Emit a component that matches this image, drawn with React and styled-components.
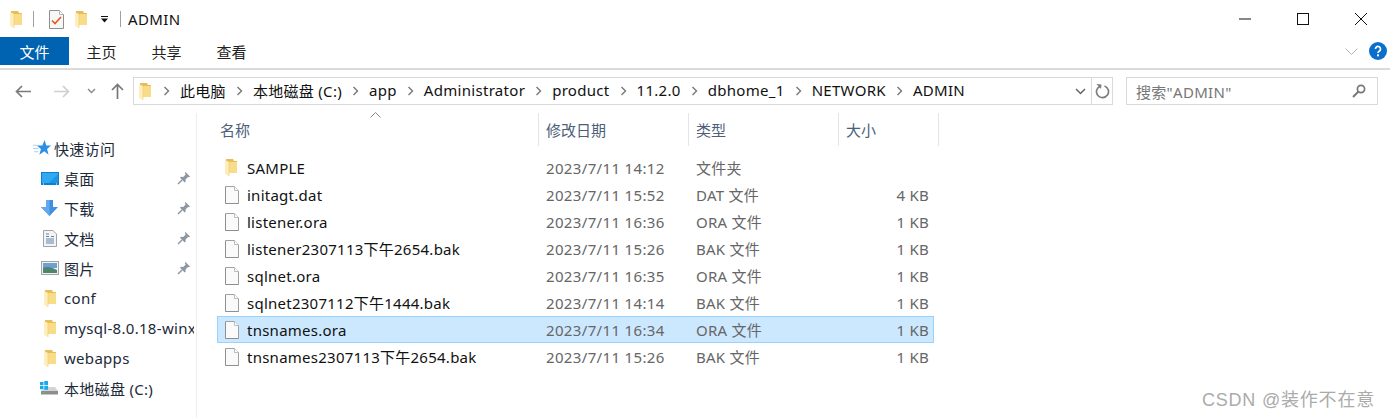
import React from "react";
import styled, { createGlobalStyle } from "styled-components";

const GlobalStyle = createGlobalStyle`
  html, body {
    margin: 0;
    padding: 0;
    background: #fff;
    overflow: hidden;
  }
  * { box-sizing: border-box; }
`;

const Window = styled.div`
  position: relative;
  width: 1390px;
  height: 418px;
  overflow: hidden;
  background: #fff;
  color: #1a1a1a;
  font-family: "Noto Sans", "Noto Sans CJK SC", sans-serif;
  font-size: 15px;
`;

const TitleBar = styled.div`
  display: flex;
  align-items: center;
  height: 38px;
  padding-left: 9px;
`;

const TitleDivider = styled.div`
  width: 1px;
  height: 16px;
  background: #a0a0a0;
  margin-left: ${(p) => p.$left}px;
`;

const TitleIcon = styled.span`
  display: flex;
  margin-left: ${(p) => p.$left}px;
`;

const TitleText = styled.div`
  font-size: 15px;
  letter-spacing: 0.4px;
  margin-left: 7px;
  color: #111;
`;

const WindowButtons = styled.div`
  display: flex;
  margin-left: auto;
`;

const WindowButton = styled.div`
  width: 58px;
  display: flex;
  justify-content: center;
  align-items: center;
`;

const Ribbon = styled.div`
  display: flex;
  align-items: center;
  height: 32px;
  border-bottom: 2px solid #dadada;
  padding-bottom: 4px;
`;

const FileTab = styled.div`
  width: 69px;
  height: 28px;
  background: #0063b1;
  color: #fff;
  display: flex;
  align-items: center;
  justify-content: center;
  font-size: 15px;
`;

const RibbonTab = styled.div`
  width: 65px;
  text-align: center;
  font-size: 15px;
  color: #222;
`;

const RibbonRight = styled.div`
  display: flex;
  align-items: center;
  gap: 11px;
  margin-left: auto;
  padding-right: 3px;
`;

const NavRow = styled.div`
  display: flex;
  align-items: center;
  height: 43px;
  padding: 7px 12px 8px 14px;
`;

const NavButtons = styled.div`
  display: flex;
  align-items: center;
  width: 119px;
  flex: none;
`;

const NavSlot = styled.div`
  display: flex;
  margin-left: ${(p) => p.$left}px;
`;

const AddressBox = styled.div`
  display: flex;
  align-items: center;
  width: 959px;
  height: 28px;
  border: 1px solid #d9d9d9;
  padding-left: 5px;
  flex: none;
`;

const AddressFolder = styled.span`
  display: flex;
  margin-right: 2px;
`;

const Crumb = styled.span`
  white-space: nowrap;
  font-size: 15px;
  letter-spacing: 0.3px;
  color: #111;
  position: relative;
  top: -1px;
`;

const CrumbArrow = styled.span`
  display: flex;
  width: 27px;
  justify-content: center;
`;

const AddressEnd = styled.div`
  display: flex;
  align-items: center;
  margin-left: auto;
  height: 100%;
  width: 21px;
  justify-content: center;
`;

const RefreshBox = styled.div`
  width: 21px;
  height: 28px;
  border: 1px solid #d9d9d9;
  border-left: none;
  display: flex;
  align-items: center;
  justify-content: center;
  flex: none;
  margin-right: 13px;
`;

const SearchBox = styled.div`
  display: flex;
  align-items: center;
  justify-content: space-between;
  width: 252px;
  height: 28px;
  border: 1px solid #d9d9d9;
  padding: 0 11px 0 9px;
  color: #777;
  font-size: 15px;
  letter-spacing: 0.3px;
  flex: none;
`;

const Body = styled.div`
  display: flex;
  height: 305px;
`;

const Sidebar = styled.div`
  width: 197px;
  flex: none;
  border-right: 1px solid #eeeeee;
  padding-top: 20px;
`;

const NavItem = styled.div`
  display: flex;
  align-items: center;
  height: 30px;
  padding-left: ${(p) => (p.$top ? 29 : 35)}px;
  position: relative;
`;

const NavIcon = styled.div`
  width: ${(p) => (p.$top ? 25 : 29)}px;
  flex: none;
  display: flex;
  justify-content: center;
`;

const NavLabel = styled.div`
  width: 130px;
  overflow: hidden;
  white-space: nowrap;
  font-size: 15px;
  letter-spacing: 0.3px;
  color: #1c2a3a;
`;

const Pin = styled.div`
  position: absolute;
  left: 177px;
  top: 8px;
  display: flex;
`;

const Main = styled.div`
  flex: 1;
  padding-left: 20px;
`;

const HeaderRow = styled.div`
  display: flex;
  height: 33px;
  position: relative;
`;

const SortCaret = styled.div`
  position: absolute;
  left: 153px;
  top: -1px;
  display: flex;
`;

const HeaderCell = styled.div`
  width: ${(p) => p.$w}px;
  padding-left: ${(p) => p.$pad}px;
  display: flex;
  align-items: center;
  border-right: 1px solid #e5e5e5;
  font-size: 15px;
  color: #4c607a;
`;

const Rows = styled.div`
  padding-top: 8px;
`;

const Row = styled.div`
  display: flex;
  align-items: center;
  width: 717px;
  height: 27px;
  border: 1px solid ${(p) => (p.$selected ? "#99d1ff" : "transparent")};
  background: ${(p) => (p.$selected ? "#cce8ff" : "transparent")};
  font-size: 15px;
  letter-spacing: 0.25px;
`;

const NameCell = styled.div`
  display: flex;
  align-items: center;
  width: 320px;
  padding-left: 7px;
  color: #111;
`;

const FileIconWrap = styled.div`
  width: 22px;
  flex: none;
  display: flex;
`;

const DateCell = styled.div`
  width: 150px;
  padding-left: 8px;
  color: #666;
  letter-spacing: 0.35px;
`;

const TypeCell = styled.div`
  width: 120px;
  color: #666;
  padding-left: 8px;
`;

const SizeCell = styled.div`
  width: 125px;
  text-align: right;
  color: #666;
  padding-right: 4px;
`;

const Watermark = styled.div`
  position: absolute;
  right: 15px;
  bottom: 7px;
  font-size: 18px;
  letter-spacing: 0.8px;
  color: #ababab;
  font-family: "Liberation Sans", "Noto Sans CJK SC", sans-serif;
`;

function FolderIcon() {
  return (
    <svg width="12" height="17" viewBox="0 0 12 17">
      <path d="M1 0h7l1 2h3v12H1z" fill="#e6bd58" />
      <path d="M4 3h8v11H4z" fill="#f8dc88" />
      <path d="M0 1l4 2v14l-4-2z" fill="#fdeebb" />
      <path d="M4 3v14" stroke="#eccb75" strokeWidth="0.6" />
    </svg>
  );
}

function FileIcon() {
  return (
    <svg width="14" height="18" viewBox="0 0 14 18">
      <path d="M.5.5h9l4 4v13H.5z" fill="#fafafa" stroke="#a0a0a0" />
      <path d="M9.5.5v4h4" fill="#fff" stroke="#bcbcbc" />
      <path d="M1 17.500h12.500M.5 1v16.500" stroke="#8f8f8f" strokeWidth="1" />
    </svg>
  );
}

function Chevron({ color = "#777" }) {
  return (
    <svg width="7" height="10" viewBox="0 0 7 10">
      <path d="M1.5 1l4 4-4 4" fill="none" stroke={color} strokeWidth="1.4" />
    </svg>
  );
}

function PinIcon() {
  return (
    <svg width="14" height="14" viewBox="0 0 14 14">
      <path d="M8.500 1L13 5.500l-1 .8-1-.4-2.500 2.500.2 2.200-1 1L3 6.800l1-1 2.200.2L8.700 3.500l-.9-1.500z" fill="#8d97a3" />
      <path d="M5 9L1 13" stroke="#8d97a3" strokeWidth="1.400" />
    </svg>
  );
}

const crumbs = ["此电脑", "本地磁盘 (C:)", "app", "Administrator", "product", "11.2.0", "dbhome_1", "NETWORK", "ADMIN"];

const sidebarItems = [
  {
    label: "桌面",
    pin: true,
    icon: (
      <svg width="18" height="13" viewBox="0 0 18 13">
        <rect width="18" height="13" fill="#0f7fd0" />
        <path d="M1 1h16v10H1z" fill="#2fa9f2" />
        <path d="M8 11l9-9v9z" fill="#1c95e4" />
        <path d="M2 12h1M15 12h1" stroke="#fff" strokeWidth="1" />
      </svg>
    ),
  },
  {
    label: "下载",
    pin: true,
    icon: (
      <svg width="17" height="16" viewBox="0 0 17 16">
        <path d="M5 0h7v7h5l-8.500 9L0 7h5z" fill="#3f8fe0" />
        <path d="M5 0h3.500v16L0 7h5z" fill="#64a9ee" />
      </svg>
    ),
  },
  {
    label: "文档",
    pin: true,
    icon: (
      <svg width="14" height="17" viewBox="0 0 14 17">
        <path d="M.5.500h9.500l3.500 3.500v12.500H.5z" fill="#f4f4f4" stroke="#a3a3a3" />
        <path d="M3 4h3M3 6.500h3M8 6.500h3M3 9h8M3 11h8M3 13h8" stroke="#5f85a8" strokeWidth="1" />
      </svg>
    ),
  },
  {
    label: "图片",
    pin: true,
    icon: (
      <svg width="18" height="14" viewBox="0 0 18 14">
        <rect x=".5" y=".5" width="17" height="13" fill="#f2f2f2" stroke="#a3a3a3" />
        <rect x="2" y="2" width="14" height="5" fill="#6f9fd3" />
        <path d="M2 7c4-2 8-1 14 2v3H2z" fill="#4f8570" />
      </svg>
    ),
  },
  { label: "conf", icon: <FolderIcon /> },
  { label: "mysql-8.0.18-winx64", icon: <FolderIcon /> },
  { label: "webapps", icon: <FolderIcon /> },
  {
    label: "本地磁盘 (C:)",
    icon: (
      <svg width="19" height="15" viewBox="0 0 19 15">
        <path d="M1 10l5-4h9l3 4v3H1z" fill="#d4d4d4" />
        <path d="M1 10h17v3.500H1z" fill="#8d8d8d" />
        <path d="M2.500 11.500h2" stroke="#3fd06a" strokeWidth="1" />
        <path d="M0 1h3.500v3.300H0zM4.300 0H8v4.300H4.300zM0 5h3.500v3.300H0zM4.300 5H8v3.800H4.300z" fill="#16a9ee" />
      </svg>
    ),
  },
];

const files = [
  { name: "SAMPLE", date: "2023/7/11 14:12", type: "文件夹", size: "", folder: true },
  { name: "initagt.dat", date: "2023/7/11 15:52", type: "DAT 文件", size: "4 KB" },
  { name: "listener.ora", date: "2023/7/11 16:36", type: "ORA 文件", size: "1 KB" },
  { name: "listener2307113下午2654.bak", date: "2023/7/11 15:26", type: "BAK 文件", size: "1 KB" },
  { name: "sqlnet.ora", date: "2023/7/11 16:35", type: "ORA 文件", size: "1 KB" },
  { name: "sqlnet2307112下午1444.bak", date: "2023/7/11 14:14", type: "BAK 文件", size: "1 KB" },
  { name: "tnsnames.ora", date: "2023/7/11 16:34", type: "ORA 文件", size: "1 KB", selected: true },
  { name: "tnsnames2307113下午2654.bak", date: "2023/7/11 15:26", type: "BAK 文件", size: "1 KB" },
];

export default function App() {
  return (
    <Window>
      <GlobalStyle />
      <TitleBar>
        <TitleIcon $left={1}>
          <FolderIcon />
        </TitleIcon>
        <TitleDivider $left={11} />
        <TitleIcon $left={15}>
          <svg width="15" height="19" viewBox="0 0 15 19">
            <path d="M.5.500h10l4 4v14H.5z" fill="#f7f7f7" stroke="#8f8f8f" />
            <path d="M10.500.500v4h4" fill="#fff" stroke="#b5b5b5" />
            <path d="M3 10.500l3 3 6-6.500" fill="none" stroke="#e8591f" strokeWidth="1.700" />
          </svg>
        </TitleIcon>
        <TitleIcon $left={11}>
          <FolderIcon />
        </TitleIcon>
        <TitleIcon $left={13}>
          <svg width="9" height="7" viewBox="0 0 9 7">
            <path d="M1 .5h7" stroke="#111" strokeWidth="1" />
            <path d="M1 2.500h7L4.500 6.500z" fill="#111" />
          </svg>
        </TitleIcon>
        <TitleDivider $left={11} />
        <TitleText>ADMIN</TitleText>
        <WindowButtons>
          <WindowButton>
            <svg width="12" height="2" viewBox="0 0 12 2">
              <path d="M0 1h12" stroke="#111" strokeWidth="1" />
            </svg>
          </WindowButton>
          <WindowButton>
            <svg width="12" height="12" viewBox="0 0 12 12">
              <rect x=".5" y=".5" width="11" height="11" fill="none" stroke="#111" />
            </svg>
          </WindowButton>
          <WindowButton>
            <svg width="12" height="12" viewBox="0 0 12 12">
              <path d="M0 0l12 12M12 0L0 12" stroke="#111" strokeWidth="1" />
            </svg>
          </WindowButton>
        </WindowButtons>
      </TitleBar>

      <Ribbon>
        <FileTab>文件</FileTab>
        <RibbonTab>主页</RibbonTab>
        <RibbonTab>共享</RibbonTab>
        <RibbonTab>查看</RibbonTab>
        <RibbonRight>
          <svg width="13" height="7" viewBox="0 0 13 7">
            <path d="M.5.500l6 6 6-6" fill="none" stroke="#b5b5b5" strokeWidth="1" />
          </svg>
          <svg width="18" height="18" viewBox="0 0 18 18">
            <circle cx="9" cy="9" r="9" fill="#0a6fcc" />
            <path d="M6.500 7a2.500 2.500 0 1 1 3.800 2.100c-.9.600-1.300 1-1.300 2" fill="none" stroke="#fff" strokeWidth="1.700" />
            <rect x="8" y="12.300" width="2" height="2" fill="#fff" />
          </svg>
        </RibbonRight>
      </Ribbon>

      <NavRow>
        <NavButtons>
          <NavSlot $left={1}>
            <svg width="16" height="13" viewBox="0 0 16 13">
              <path d="M7 1L1.500 6.500 7 12M2 6.500h14" fill="none" stroke="#7a7a7a" strokeWidth="1.700" />
            </svg>
          </NavSlot>
          <NavSlot $left={23}>
            <svg width="16" height="13" viewBox="0 0 16 13">
              <path d="M9 1l5.500 5.500L9 12M14 6.500H0" fill="none" stroke="#cfcfcf" strokeWidth="1.700" />
            </svg>
          </NavSlot>
          <NavSlot $left={17}>
            <svg width="9" height="6" viewBox="0 0 9 6">
              <path d="M1 1l3.500 3.500L8 1" fill="none" stroke="#888" strokeWidth="1.400" />
            </svg>
          </NavSlot>
          <NavSlot $left={15}>
            <svg width="13" height="16" viewBox="0 0 13 16">
              <path d="M1 7l5.500-5.500L12 7M6.500 2v14" fill="none" stroke="#777" strokeWidth="1.700" />
            </svg>
          </NavSlot>
        </NavButtons>
        <AddressBox>
          <AddressFolder>
            <FolderIcon />
          </AddressFolder>
          {crumbs.map((c) => (
            <React.Fragment key={c}>
              <CrumbArrow>
                <Chevron />
              </CrumbArrow>
              <Crumb>{c}</Crumb>
            </React.Fragment>
          ))}
          <AddressEnd>
            <svg width="11" height="7" viewBox="0 0 11 7">
              <path d="M1 1l4.500 4.500L10 1" fill="none" stroke="#666" strokeWidth="1.500" />
            </svg>
          </AddressEnd>
        </AddressBox>
        <RefreshBox>
          <svg width="15" height="16" viewBox="0 0 15 16">
            <path d="M5 3.200a6 6 0 1 0 4.500-.2" fill="none" stroke="#7d7d7d" strokeWidth="1.700" />
            <path d="M1.500 1l5 .500-.5 4.500z" fill="#7d7d7d" />
          </svg>
        </RefreshBox>
        <SearchBox>
          <span>搜索"ADMIN"</span>
          <svg width="14" height="14" viewBox="0 0 14 14">
            <circle cx="9" cy="5" r="3.600" fill="none" stroke="#777" strokeWidth="1.700" />
            <path d="M6.500 7.500L1 13" stroke="#777" strokeWidth="2" />
          </svg>
        </SearchBox>
      </NavRow>

      <Body>
        <Sidebar>
          <NavItem $top>
            <NavIcon $top>
              <svg width="18" height="17" viewBox="0 0 17 16">
                <path d="M11 0l1.500 5.200H17l-3.700 3.200 1.400 5.600-4-3.300-4.700 3.300L7.500 8.500 3.500 5.200h5.300z" fill="#2b8fe6" />
                <path d="M0 5h4M0 8h5M1 11h4" stroke="#a9d0f2" strokeWidth="1" />
              </svg>
            </NavIcon>
            <NavLabel>快速访问</NavLabel>
          </NavItem>
          {sidebarItems.map((item) => (
            <NavItem key={item.label}>
              <NavIcon>{item.icon}</NavIcon>
              <NavLabel>{item.label}</NavLabel>
              {item.pin && (
                <Pin>
                  <PinIcon />
                </Pin>
              )}
            </NavItem>
          ))}
        </Sidebar>
        <Main>
          <HeaderRow>
            <SortCaret>
              <svg width="11" height="6" viewBox="0 0 11 6">
                <path d="M.5 5.500l5-5 5 5" fill="none" stroke="#888" strokeWidth="1" />
              </svg>
            </SortCaret>
            <HeaderCell $w={322} $pad={3}>名称</HeaderCell>
            <HeaderCell $w={150} $pad={7}>修改日期</HeaderCell>
            <HeaderCell $w={150} $pad={7}>类型</HeaderCell>
            <HeaderCell $w={100} $pad={7}>大小</HeaderCell>
          </HeaderRow>
          <Rows>
            {files.map((f) => (
              <Row key={f.name} $selected={f.selected}>
                <NameCell>
                  <FileIconWrap>{f.folder ? <FolderIcon /> : <FileIcon />}</FileIconWrap>
                  {f.name}
                </NameCell>
                <DateCell>{f.date}</DateCell>
                <TypeCell>{f.type}</TypeCell>
                <SizeCell>{f.size}</SizeCell>
              </Row>
            ))}
          </Rows>
        </Main>
      </Body>
      <Watermark>CSDN @装作不在意</Watermark>
    </Window>
  );
}
